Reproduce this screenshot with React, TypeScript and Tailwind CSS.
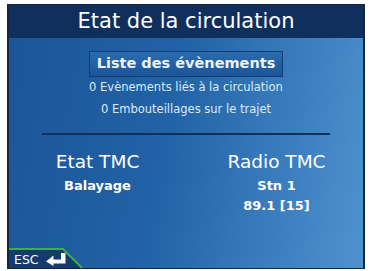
function EnterArrow() {
  return (
    <svg width="20" height="13" viewBox="0 0 20 13" fill="white">
      <path d="M15 0 H19.5 V10.5 H6.5 V6.5 H15 Z" />
      <path d="M0 8.5 L7.5 2.5 L7.5 13 Z" />
    </svg>
  );
}

function EscTab() {
  return (
    <div className="absolute bottom-0 left-0 h-[20px] w-[80px]">
      <svg className="absolute inset-0" width="80" height="20" viewBox="0 0 80 20">
        <path d="M0 1 L54 1 L74 21 L0 21 Z" fill="#143a6e" />
        <path d="M0 1 L54 1 L74 21" fill="none" stroke="#3fae49" strokeWidth="2" />
      </svg>
      <div className="relative flex h-full items-end gap-[7px] pb-[2px] pl-[5px] text-[12.5px] leading-none text-white">
        <span>ESC</span>
        <EnterArrow />
      </div>
    </div>
  );
}

export default function App() {
  return (
    <div
      className="h-[271px] w-[370px] bg-white pl-[7px] pt-[4px]"
      style={{ fontFamily: '"DejaVu Sans", Verdana, sans-serif' }}
    >
      <div className="relative flex h-[265px] w-[358px] flex-col overflow-hidden border-x-[2px] border-y-[1px] border-[#16263c] bg-[linear-gradient(100deg,#1b5597_0%,#2262a6_45%,#4e93d0_100%)]">
        <div className="flex h-[33px] items-center justify-center bg-[#0f2f5c] text-[21px] text-white">
          Etat de la circulation
        </div>

        <div className="flex flex-col items-center pt-[13px]">
          <div className="flex h-[26px] items-center border border-[#123d74] bg-[linear-gradient(180deg,#2a6cb0,#1c5597)] px-[7px] text-[14.5px] font-bold text-[#eef4fb]">
            Liste des évènements
          </div>
          <div className="mt-[3px] text-[11.5px] leading-[14px] text-[#dfeaf6]">
            0 Evènements liés à la circulation
          </div>
          <div className="mt-[8px] text-[11.5px] leading-[14px] text-[#dfeaf6]">
            0 Embouteillages sur le trajet
          </div>
        </div>

        <div className="mx-[33px] mt-[17px] h-[2px] bg-[#0f2f5c]" />

        <div className="mt-[15px] grid grid-cols-2 text-center text-white">
          <div className="flex flex-col items-center">
            <div className="text-[18.5px] leading-[24px]">Etat TMC</div>
            <div className="mt-[4px] text-[13px] font-bold leading-[16px]">Balayage</div>
          </div>
          <div className="flex flex-col items-center pl-[4px]">
            <div className="text-[18.5px] leading-[24px]">Radio TMC</div>
            <div className="mt-[4px] text-[13px] font-bold leading-[16px]">Stn 1</div>
            <div className="mt-[4px] text-[13px] font-bold leading-[16px]">89.1 [15]</div>
          </div>
        </div>

        <EscTab />
      </div>
    </div>
  );
}
